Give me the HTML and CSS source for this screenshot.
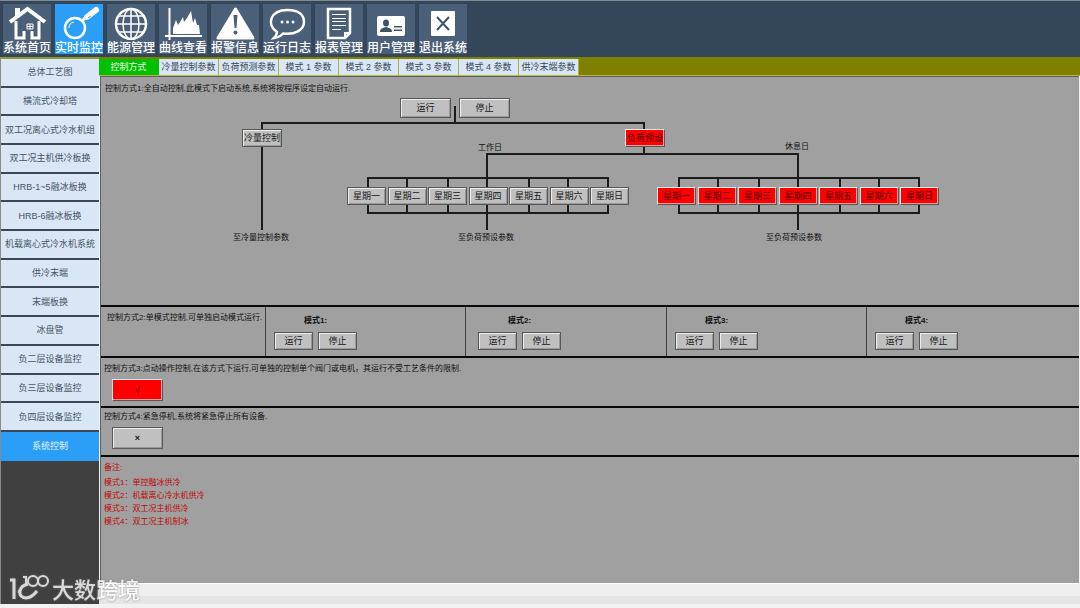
FILE: index.html
```html
<!DOCTYPE html>
<html lang="zh-CN">
<head>
<meta charset="utf-8">
<title>系统控制</title>
<link rel="stylesheet" href="styles.css">
</head>
<body>
<header class="toolbar">
  <button class="tool" type="button">
    <svg class="tool-icon" viewBox="0 0 48 36"><path d="M12 14V4h5v6" fill="#fff"/><path d="M7 18 24.5 5 42 18" fill="none" stroke="#fff" stroke-width="4"/><path d="M13 17v17h8V27M36 17v17h-7V27" fill="none" stroke="#fff" stroke-width="3"/><path d="M24 20h6v5h-6zM27 20v5M24 22.5h6" fill="none" stroke="#fff"/></svg>
    <span class="tool-label">系统首页</span>
  </button>
  <button class="tool tool-active" type="button">
    <svg class="tool-icon" viewBox="0 0 48 36"><circle cx="20" cy="24" r="10" fill="none" stroke="#fff" stroke-width="2.5"/><path d="M14 24a6 6 0 0 1 5-6" fill="none" stroke="#fff"/><path d="m27 17 5-5" stroke="#fff" stroke-width="3"/><path d="m32 13 9-7" stroke="#fff" stroke-width="6" stroke-linecap="round"/><path d="m33 14 3-2" stroke="#2b9ff8" stroke-width="1"/></svg>
    <span class="tool-label">实时监控</span>
  </button>
  <button class="tool" type="button">
    <svg class="tool-icon" viewBox="0 0 48 36"><g fill="none" stroke="#fff" stroke-width="1.5"><circle cx="24" cy="20" r="15" stroke-width="2.5"/><ellipse cx="24" cy="20" rx="8" ry="15"/><path d="M24 5v30M9 20h30M12 12h24M12 28h24"/></g></svg>
    <span class="tool-label">能源管理</span>
  </button>
  <button class="tool" type="button">
    <svg class="tool-icon" viewBox="0 0 48 36"><path d="M10.5 4v32M6 32h37" stroke="#fff" stroke-width="2"/><path d="M14 30v-6l3-8 2 5 2-3 3-5 1 5 3-4 4-7 2 12 2-5 2 7h2l1 9z" fill="#fff"/></svg>
    <span class="tool-label">曲线查看</span>
  </button>
  <button class="tool" type="button">
    <svg class="tool-icon" viewBox="0 0 48 36"><path d="M24.5 5 42 34H7z" fill="#fff" stroke="#fff" stroke-width="3" stroke-linejoin="round"/><path d="M22.5 11h4l-1 13h-2z" fill="#4a6078"/><circle cx="24.5" cy="28.5" r="2" fill="#4a6078"/></svg>
    <span class="tool-label">报警信息</span>
  </button>
  <button class="tool" type="button">
    <svg class="tool-icon" viewBox="0 0 48 36"><path d="M14 28C3 21 7 6 24.500 6 37 6 41 12 41 18c0 8-9 13-21 11.500-2 2.500-5 4-9 4.500 2-2 3-4 3-6z" fill="none" stroke="#fff" stroke-width="2.5"/><g fill="#fff"><circle cx="19" cy="18" r="1.500"/><circle cx="24.500" cy="18" r="1.500"/><circle cx="30" cy="18" r="1.500"/></g></svg>
    <span class="tool-label">运行日志</span>
  </button>
  <button class="tool" type="button">
    <svg class="tool-icon" viewBox="0 0 48 36"><path d="M13 5h22v24l-5 5H13z" fill="none" stroke="#fff" stroke-width="2.5"/><path d="M30 34v-5h5" fill="none" stroke="#fff" stroke-width="2"/><path d="M17 10.5h14M17 14.500h14M17 17.500h14M17 21.500h14M17 25.500h9" stroke="#fff"/></svg>
    <span class="tool-label">报表管理</span>
  </button>
  <button class="tool" type="button">
    <svg class="tool-icon" viewBox="0 0 48 36"><rect x="10" y="12" width="28" height="20" rx="2" fill="#fff"/><g fill="#3f5268"><ellipse cx="19" cy="19" rx="3" ry="3.5"/><path d="M13 28c0-4 3-4 6-5 3 1 6 1 6 5z"/><path d="M27 22h8v1.500h-8zM27 25.500h8V27h-8z"/></g></svg>
    <span class="tool-label">用户管理</span>
  </button>
  <button class="tool" type="button">
    <svg class="tool-icon" viewBox="0 0 48 36"><rect x="12" y="7" width="24" height="25" rx="1" fill="#fff"/><path d="m18 13 12 13M30 13 18 26" stroke="#3f5268" stroke-width="2"/></svg>
    <span class="tool-label">退出系统</span>
  </button>
</header>

<div class="workspace">
  <aside class="sidebar">
    <nav class="side-nav">
      <a class="side-link" href="#">总体工艺图</a>
      <a class="side-link" href="#">横流式冷却塔</a>
      <a class="side-link" href="#">双工况离心式冷水机组</a>
      <a class="side-link" href="#">双工况主机供冷板换</a>
      <a class="side-link" href="#">HRB-1~5融冰板换</a>
      <a class="side-link" href="#">HRB-6融冰板换</a>
      <a class="side-link" href="#">机载离心式冷水机系统</a>
      <a class="side-link" href="#">供冷末端</a>
      <a class="side-link" href="#">末端板换</a>
      <a class="side-link" href="#">冰盘管</a>
      <a class="side-link" href="#">负二层设备监控</a>
      <a class="side-link" href="#">负三层设备监控</a>
      <a class="side-link" href="#">负四层设备监控</a>
      <a class="side-link side-link-active" href="#">系统控制</a>
    </nav>
    <div class="side-rest"></div>
  </aside>

  <main class="main">
    <nav class="tabs">
      <button class="tab tab-active" type="button">控制方式</button>
      <button class="tab" type="button">冷量控制参数</button>
      <button class="tab" type="button">负荷预测参数</button>
      <button class="tab" type="button">模式 1 参数</button>
      <button class="tab" type="button">模式 2 参数</button>
      <button class="tab" type="button">模式 3 参数</button>
      <button class="tab" type="button">模式 4 参数</button>
      <button class="tab" type="button">供冷末端参数</button>
    </nav>

    <div class="panel">
      <section class="diagram">
        <p class="desc">控制方式1:全自动控制,此模式下启动系统,系统将按程序设定自动运行.</p>
        <svg class="wires" viewBox="0 0 860 228" width="860" height="228">
          <path d="M354 29v17M161 153V46h382v31M386 153V77h311v76"/>
          <path d="M267 136v-35h240v35zM306 101v35M347 101v35M428 101v35M467 101v35"/>
          <path d="M578 136v-35h240v35zM617 101v35M658 101v35M739 101v35M778 101v35"/>
        </svg>
        <div class="node node-power">
          <button class="btn btn-wide" type="button">运行</button>
          <button class="btn btn-wide" type="button">停止</button>
        </div>
        <button class="btn btn-tag node node-cold" type="button">冷量控制</button>
        <button class="btn btn-tag btn-on node node-load" type="button">负荷预设</button>
        <span class="node node-workday">工作日</span>
        <span class="node node-restday">休息日</span>
        <div class="node days days-work">
          <button class="btn" type="button">星期一</button>
          <button class="btn" type="button">星期二</button>
          <button class="btn" type="button">星期三</button>
          <button class="btn" type="button">星期四</button>
          <button class="btn" type="button">星期五</button>
          <button class="btn" type="button">星期六</button>
          <button class="btn" type="button">星期日</button>
        </div>
        <div class="node days days-rest">
          <button class="btn btn-on" type="button">星期一</button>
          <button class="btn btn-on" type="button">星期二</button>
          <button class="btn btn-on" type="button">星期三</button>
          <button class="btn btn-on" type="button">星期四</button>
          <button class="btn btn-on" type="button">星期五</button>
          <button class="btn btn-on" type="button">星期六</button>
          <button class="btn btn-on" type="button">星期日</button>
        </div>
        <span class="node node-to-cold">至冷量控制参数</span>
        <span class="node node-to-work">至负荷预设参数</span>
        <span class="node node-to-rest">至负荷预设参数</span>
      </section>

      <section class="modes">
        <p class="desc mode-desc">控制方式2:单模式控制,可单独启动模式运行.</p>
        <div class="mode">
          <h2 class="mode-title">模式1:</h2>
          <div class="mode-actions"><button class="btn" type="button">运行</button><button class="btn" type="button">停止</button></div>
        </div>
        <div class="mode mode-inset">
          <h2 class="mode-title">模式2:</h2>
          <div class="mode-actions"><button class="btn" type="button">运行</button><button class="btn" type="button">停止</button></div>
        </div>
        <div class="mode">
          <h2 class="mode-title">模式3:</h2>
          <div class="mode-actions"><button class="btn" type="button">运行</button><button class="btn" type="button">停止</button></div>
        </div>
        <div class="mode">
          <h2 class="mode-title">模式4:</h2>
          <div class="mode-actions"><button class="btn" type="button">运行</button><button class="btn" type="button">停止</button></div>
        </div>
      </section>

      <section class="control">
        <p class="desc">控制方式3:点动操作控制,在该方式下运行,可单独的控制单个阀门或电机，其运行不受工艺条件的限制.</p>
        <button class="btn btn-toggle btn-on" type="button">√</button>
      </section>

      <section class="control control-stop">
        <p class="desc">控制方式4:紧急停机,系统将紧急停止所有设备.</p>
        <button class="btn btn-toggle btn-cross" type="button">×</button>
      </section>

      <section class="notes">
        <h2 class="notes-title">备注:</h2>
        <ul class="notes-list">
          <li>模式1：单控融冰供冷</li>
          <li>模式2：机载离心冷水机供冷</li>
          <li>模式3：双工况主机供冷</li>
          <li>模式4：双工况主机制冰</li>
        </ul>
      </section>
    </div>
    <div class="status"></div>
  </main>
</div>

<div class="watermark">
  <svg class="watermark-logo" viewBox="0 0 40 28" width="40" height="28"><g fill="none" stroke="#fff" stroke-width="3"><path d="M1 6h4v19"/><path d="M19 10C9 12 8 24 17 24c4 0 7-2 11-7M9 17l3 1"/></g><g fill="none" stroke="#fff" stroke-width="2"><path d="M14 3h3v7"/><circle cx="24" cy="7" r="5"/><circle cx="34" cy="7" r="5"/></g></svg>
  <span>大数跨境</span>
</div>
</body>
</html>
```

FILE: styles.css
```css
* { box-sizing: border-box; }

body {
  margin: 0;
  min-height: 100vh;
  display: flex;
  flex-direction: column;
  padding-bottom: 4px;
  background: #f2f2f2;
  color: #111;
  font: 8px/12px "Liberation Sans", "Noto Sans CJK SC", sans-serif;
  position: relative;
}

button { font-family: inherit; cursor: pointer; }
p, h2, ul { margin: 0; padding: 0; }
ul { list-style: none; }

/* Top toolbar */
.toolbar {
  display: flex;
  gap: 4px;
  padding: 3px;
  background: #34465a;
  border-top: 1px solid #7f8a92;
}
.tool {
  width: 48px;
  height: 50px;
  padding: 0;
  border: 0;
  display: flex;
  flex-direction: column;
  align-items: center;
  background: #4a6078;
  color: #fff;
}
.tool-active { background: #2b9ff8; }
.tool-icon { display: block; width: 48px; height: 36px; }
.tool-label {
  font: 500 12px/14px "Noto Sans CJK SC", sans-serif;
  white-space: nowrap;
}

.workspace { flex: 1; display: flex; }

/* Left navigation */
.sidebar {
  width: 99px;
  display: flex;
  flex-direction: column;
  border-top: 2px solid #8c9a30;
  border-left: 1px solid #8a8a8a;
  background: #404040;
}
.side-nav {
  flex: 14 1 0;
  display: grid;
  grid-auto-rows: 1fr;
}
.side-rest { flex: 5 1 0; }
.side-link {
  display: flex;
  align-items: center;
  justify-content: center;
  border-bottom: 2px solid #3c4656;
  background: #d8e6f6;
  color: #465564;
  font-size: 9px;
  text-decoration: none;
  white-space: nowrap;
}
.side-link-active { background: #2b9ff8; color: #e4f2ff; border-bottom: 0; }

/* Tabs */
.main { flex: 1; min-width: 0; display: flex; flex-direction: column; }
.tabs {
  display: flex;
  padding-top: 2px;
  background: #808000;
  border-bottom: 1px solid #b8b840;
}
.tab {
  width: 60px;
  height: 16px;
  padding: 0;
  border: 0;
  border-right: 1px solid #a4b43c;
  background: #d8e6f6;
  color: #3c4a56;
  font-size: 9px;
  line-height: 14px;
  white-space: nowrap;
}
.tab-active { background: #00c000; color: #e8ffe8; border-right-color: #00c000; }

.panel {
  flex: 1;
  margin: 0 1px;
  border-top: 1px solid #606060;
  border-left: 1px solid #606060;
  background: #a0a0a0;
}
.status {
  height: 21px;
  border-top: 1px solid #fff;
  border-bottom: 8px solid #e5e5e5;
  background: #efefef;
}

.btn {
  width: 39px;
  height: 18px;
  padding: 0;
  border: 1px solid #585858;
  box-shadow: inset 1px 1px 0 #ececec, inset -1px -1px 0 #989898;
  background: #c0c0c0;
  color: #181818;
  font-size: 9px;
  line-height: 14px;
  white-space: nowrap;
}
.btn-wide { width: 51px; height: 20px; }
.btn-tag { width: 40px; }
.btn-toggle { width: 51px; height: 22px; display: block; }
.btn-on {
  border-color: #ececec #585858 #585858 #ececec;
  box-shadow: inset -1px -1px 0 #d8a0a0;
  background: #f00;
  color: #500000;
}
.btn-cross { font-weight: bold; }

/* Control tree */
.diagram { position: relative; height: 228px; padding: 6px 4px; }
.wires {
  position: absolute;
  left: 0;
  top: 0;
  fill: none;
  stroke: #1c1c1c;
  stroke-width: 2;
}
.node { position: absolute; white-space: nowrap; }
.node-power { left: 299px; top: 21px; display: flex; gap: 8px; }
.node-cold { left: 141px; top: 52px; }
.node-load { left: 524px; top: 52px; }
.node-workday { left: 377px; top: 65px; }
.node-restday { left: 684px; top: 64px; }
.days { top: 110px; width: 282px; display: flex; justify-content: space-between; }
.days-work { left: 246px; }
.days-rest { left: 556px; }
.node-to-cold { left: 132px; top: 155px; }
.node-to-work { left: 357px; top: 155px; }
.node-to-rest { left: 665px; top: 155px; }

/* Single-mode control */
.modes {
  display: grid;
  grid-template-columns: minmax(0, 164fr) 200fr 201fr 200fr 213fr;
  border-top: 2px solid #080808;
}
.mode-desc { padding: 5px 0 0 6px; white-space: nowrap; }
.mode { padding: 8px 0 6px 8px; border-left: 1px solid #404040; }
.mode-inset { padding-left: 12px; }
.mode-title { padding-left: 30px; font-size: 8px; line-height: 12px; }
.mode-actions { display: flex; gap: 5px; padding-top: 5px; }

.control { border-top: 2px solid #080808; padding: 5px 3px; }
.control .desc { padding-bottom: 4px; }
.control .btn { margin-left: 8px; }
.control-stop { padding: 3px 3px 6px; }
.control-stop .desc { padding-bottom: 4px; }

.notes { border-top: 2px solid #080808; padding: 4px 3px; color: #c00808; }
.notes-title { font-size: 8px; line-height: 13px; font-weight: normal; padding-bottom: 2px; }
.notes-list { line-height: 13px; }

.watermark {
  position: absolute;
  left: 9px;
  bottom: 6px;
  display: flex;
  align-items: center;
  gap: 3px;
  opacity: 0.8;
  color: #fff;
  font: 500 22px/28px "Noto Sans CJK SC", sans-serif;
  filter: drop-shadow(0 0 1px #777);
  pointer-events: none;
}
```
